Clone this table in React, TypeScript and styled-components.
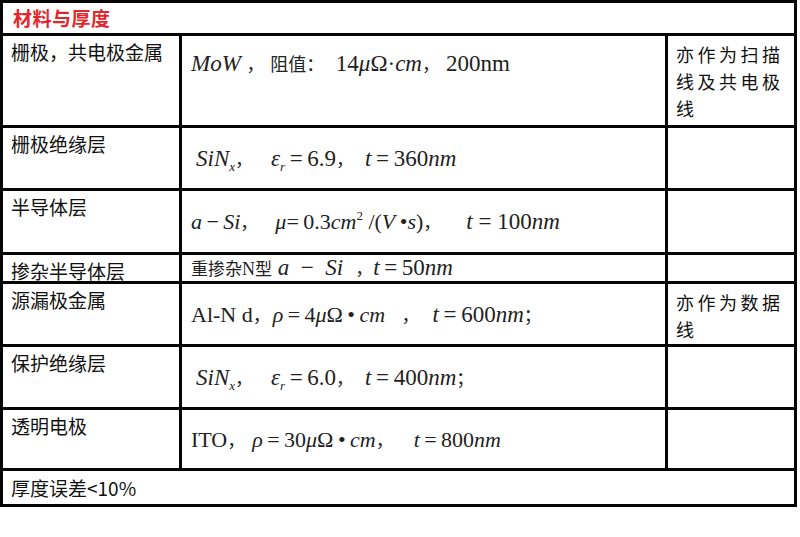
import styled, { createGlobalStyle } from "styled-components";

const GlobalStyle = createGlobalStyle`
	body {
		margin: 0;
		background: #fff;
	}
`;

// black background + gap draws the ruled lines of the table
const Table = styled.div`
	display: grid;
	grid-template-columns: 176px 483px 126px;
	grid-template-rows: 30px 89px 60px 61px 26px 60px 60px 58px 33px;
	gap: 3px;
	padding: 3px;
	width: 797px;
	box-sizing: border-box;
	background: #050505;
	font-family: "Noto Sans CJK SC", sans-serif;
	color: #111;
`;

const Cell = styled.div`
	background: #fff;
	min-width: 0;
	box-sizing: border-box;
`;

const Title = styled(Cell)`
	grid-column: 1 / -1;
	padding: 4px 0 0 10px;
	font-size: 19px;
	line-height: 22px;
	font-weight: 700;
	letter-spacing: 0.5px;
	color: #e3262b;
`;

const Label = styled(Cell)`
	padding: 4px 0 0 8px;
	font-size: 19px;
	line-height: 24px;
	white-space: nowrap;
`;

const Value = styled(Cell)<{ $top?: boolean }>`
	display: flex;
	align-items: ${(p) => (p.$top ? "flex-start" : "center")};
	padding: ${(p) => (p.$top ? "14px" : "0")} 0 0 9px;
	font-family: "Liberation Serif", "Noto Sans CJK SC", serif;
	line-height: 26px;
	color: #222;
`;

// one formula line; Word's equation objects each have their own scale
const Line = styled.span<{ $size?: number; $indent?: number }>`
	white-space: pre;
	font-size: ${(p) => p.$size ?? 22}px;
	margin-left: ${(p) => p.$indent ?? 0}px;
`;

const Seg = styled.span<{ $size: number }>`
	font-size: ${(p) => p.$size}px;
`;

const Note = styled(Cell)`
	padding: 5px 4px 0 8px;
	font-size: 18px;
	line-height: 27px;
	letter-spacing: 3.5px;
`;

const Footer = styled(Cell)`
	grid-column: 1 / -1;
	padding: 5px 0 0 8px;
	font-size: 19px;
	line-height: 24px;
`;

const V = styled.i`
	font-style: italic;
`;

const H = styled.span<{ $size?: number }>`
	font-family: "Noto Sans CJK SC", sans-serif;
	font-size: ${(p) => p.$size ?? 18}px;
`;

const Comma = styled(H)<{ $gap?: number; $before?: number }>`
	margin: 0 ${(p) => p.$gap ?? 0}px 0 ${(p) => p.$before ?? 0}px;
`;

const Sub = styled.sub`
	font-size: 13px;
	line-height: 0;
	vertical-align: -5px;
`;

const Sup = styled.sup`
	font-size: 13px;
	line-height: 0;
	vertical-align: 9px;
`;

const th = "\u2009";

function App() {
	return (
		<>
			<GlobalStyle />
			<Table>
				<Title>材料与厚度</Title>

				<Label>栅极，共电极金属</Label>
				<Value $top>
					<Line $size={23}>
						<V>MoW</V> <H>，</H> <H>阻值：</H>  14<V>μ</V>Ω·<V>cm</V>
						<Comma $gap={6}>，</Comma>200nm
					</Line>
				</Value>
				<Note>亦作为扫描线及共电极线</Note>

				<Label>栅极绝缘层</Label>
				<Value>
					<Line $size={23} $indent={5}>
						<V>SiN<Sub>x</Sub></V>
						<Comma $gap={18}>，</Comma>
						<V>ε<Sub>r</Sub></V>{th}={th}6.9
						<Comma $gap={11}>，</Comma>
						<V>t</V>{th}={th}360<V>nm</V>
					</Line>
				</Value>
				<Note />

				<Label>半导体层</Label>
				<Value>
					<Line>
						<V>a</V>{th}−{th}<V>Si</V>
						<Comma $gap={17}>，</Comma>
						<V>μ</V>={th}0.3<V>cm</V><Sup>2</Sup> /(<V>V</V>{th}•<V>s</V>)
						<Comma $gap={25}>，</Comma>
						<Seg $size={23}>
							<V>t</V> = 100<V>nm</V>
						</Seg>
					</Line>
				</Value>
				<Note />

				<Label>掺杂半导体层</Label>
				<Value>
					<Line $size={23}>
						<H $size={17}>重掺杂</H>
						<Seg $size={18}>N</Seg>
						<H $size={17}>型</H> <V>a</V>  −  <V>Si</V>
						<Comma $before={12}>，</Comma>
						<V>t</V>{th}={th}50<V>nm</V>
					</Line>
				</Value>
				<Note />

				<Label>源漏极金属</Label>
				<Value>
					<Line>
						Al-N d<Comma $gap={2}>，</Comma>
						<V>ρ</V>{th}={th}4<V>μ</V>Ω{th}•{th}<V>cm</V>   <Comma $gap={13}>，</Comma>
						<Seg $size={23}>
							<V>t</V>{th}={th}600<V>nm</V>
						</Seg>
						<H>；</H>
					</Line>
				</Value>
				<Note>亦作为数据线</Note>

				<Label>保护绝缘层</Label>
				<Value>
					<Line $size={23} $indent={5}>
						<V>SiN<Sub>x</Sub></V>
						<Comma $gap={18}>，</Comma>
						<V>ε<Sub>r</Sub></V>{th}={th}6.0
						<Comma $gap={11}>，</Comma>
						<V>t</V>{th}={th}400<V>nm</V>
						<H>；</H>
					</Line>
				</Value>
				<Note />

				<Label>透明电极</Label>
				<Value>
					<Line>
						ITO<Comma $gap={7}>，</Comma>
						<V>ρ</V>{th}={th}30<V>μ</V>Ω{th}•{th}<V>cm</V>
						<Comma $gap={20}>，</Comma>
						<V>t</V>{th}={th}800<V>nm</V>
					</Line>
				</Value>
				<Note />

				<Footer>厚度误差&lt;10%</Footer>
			</Table>
		</>
	);
}

export default App;
